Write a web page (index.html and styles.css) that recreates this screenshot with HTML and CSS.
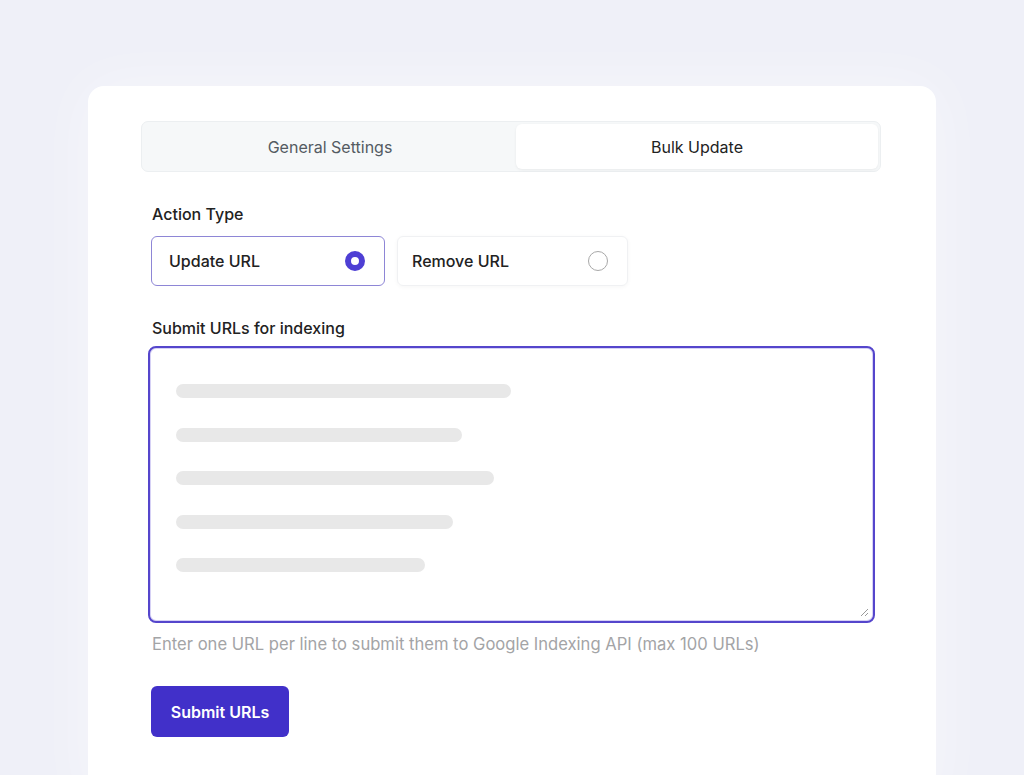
FILE: index.html
```html
<!DOCTYPE html>
<html lang="en">
<head>
    <meta charset="UTF-8">
    <meta name="viewport" content="width=device-width, initial-scale=1.0">
    <title>Bulk Update</title>
    <link rel="stylesheet" href="styles.css">
</head>
<body>
    <div class="card">
        <!-- Settings tabs -->
        <div class="tabs">
            <div class="tab">General Settings</div>
            <div class="tab active">Bulk Update</div>
        </div>

        <div class="form">
            <p class="label">Action Type</p>
            <div class="choices">
                <div class="choice selected">
                    <span>Update URL</span>
                    <span class="radio"></span>
                </div>
                <div class="choice">
                    <span>Remove URL</span>
                    <span class="radio"></span>
                </div>
            </div>

            <p class="label">Submit URLs for indexing</p>
            <div class="urls">
                <div class="line" style="width: 335px"></div>
                <div class="line" style="width: 286px"></div>
                <div class="line" style="width: 318px"></div>
                <div class="line" style="width: 277px"></div>
                <div class="line" style="width: 249px"></div>
                <svg class="grip" width="10" height="10" viewBox="0 0 10 10">
                    <path d="M9 2 L2 9 M9 6 L6 9" stroke="#9a9a9a" stroke-width="1" fill="none"/>
                </svg>
            </div>
            <p class="hint">Enter one URL per line to submit them to Google Indexing API (max 100 URLs)</p>

            <button class="submit">Submit URLs</button>
        </div>
    </div>
</body>
</html>
```

FILE: styles.css
```css
body {
    font-family: Inter, "Noto Sans", sans-serif;
    background-color: #eff0f8;
    color: #222;
    margin: 0;
    padding: 86px 0 0 88px;
    height: 775px;
    box-sizing: border-box;
    overflow: hidden;
}
.card {
    width: 848px;
    height: 720px;
    box-sizing: border-box;
    background-color: #fff;
    border-radius: 16px;
    padding: 35px 55px 0 53px;
    box-shadow: 0 0 60px rgba(255, 255, 255, 0.5);
}
.tabs {
    display: grid;
    grid-template-columns: 372px 1fr;
    padding: 2px;
    height: 51px;
    box-sizing: border-box;
    background-color: #f6f8f9;
    border: 1px solid #eceff1;
    border-radius: 7px;
}
.tab {
    display: flex;
    align-items: center;
    justify-content: center;
    font-size: 16px;
    color: #545b62;
    border-radius: 6px;
}
.tab.active {
    background-color: #fff;
    color: #222;
    box-shadow: 0 1px 3px rgba(0, 0, 0, 0.06);
}
.form {
    margin: 0 6px 0 7px;
}
.label {
    margin: 32px 0 12px 4px;
    font-size: 16px;
    font-weight: 500;
    color: #222;
}
.choices {
    display: flex;
    gap: 12px;
    margin-left: 3px;
}
.choice {
    display: flex;
    align-items: center;
    justify-content: space-between;
    box-sizing: border-box;
    width: 234px;
    height: 50px;
    padding: 0 19px 0 17px;
    font-size: 16px;
    font-weight: 500;
    border: 1px solid #f0f1f3;
    border-radius: 6px;
    box-shadow: 0 1px 4px rgba(0, 0, 0, 0.04);
}
.choice + .choice {
    width: 231px;
    padding-left: 14px;
}
.choice.selected {
    border-color: #8e86d6;
    box-shadow: none;
}
.radio {
    width: 18px;
    height: 18px;
    border: 1px solid #a8a8a8;
    border-radius: 50%;
}
.selected .radio {
    width: 20px;
    height: 20px;
    box-sizing: border-box;
    border: 6px solid #4e3fd4;
    background-color: #fff;
}
.urls {
    position: relative;
    height: 277px;
    margin-top: -4px;
    box-sizing: border-box;
    padding: 36px 26px;
    border: 2px solid #5546cc;
    border-radius: 8px;
    box-shadow: inset 0 0 0 1px #d6d1f5;
    display: flex;
    flex-direction: column;
    gap: 29.5px;
}
.line {
    height: 14px;
    border-radius: 7px;
    background-color: #e8e8e8;
}
.grip {
    position: absolute;
    right: 4px;
    bottom: 4px;
}
.hint {
    margin: 11px 0 0 4px;
    font-size: 16.6px;
    color: #a3a4a6;
}
.submit {
    margin: 32px 0 0 3px;
    width: 138px;
    height: 51px;
    background-color: #4130c9;
    color: #fff;
    border: none;
    border-radius: 6px;
    font-family: inherit;
    font-size: 16px;
    font-weight: 600;
    cursor: pointer;
}
```
